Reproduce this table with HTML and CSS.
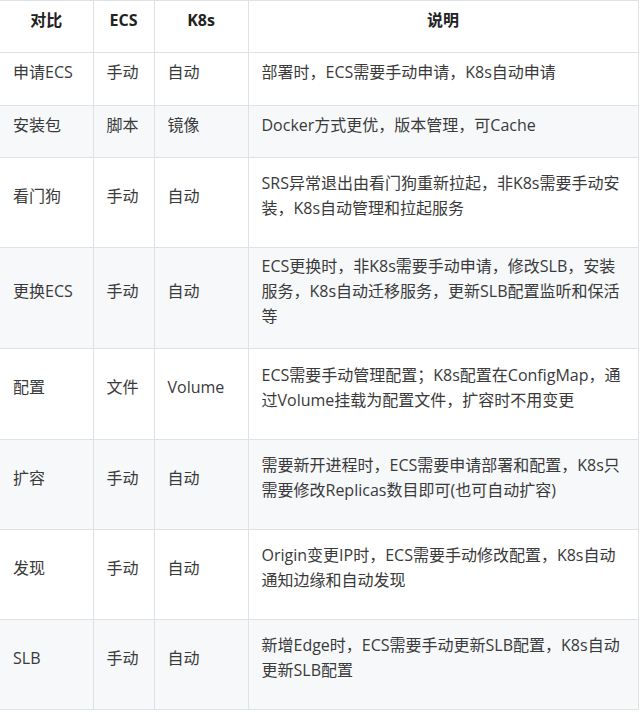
FILE: index.html
```html
<!DOCTYPE html>
<html lang="zh-CN">
<head>
<meta charset="utf-8">
<title>ECS vs K8s</title>
<link rel="stylesheet" href="styles.css">
</head>
<body>
<table class="cmp">
  <colgroup>
    <col class="c1"><col class="c2"><col class="c3"><col class="c4">
  </colgroup>
  <thead>
    <tr class="h52"><th>对比</th><th>ECS</th><th>K8s</th><th>说明</th></tr>
  </thead>
  <tbody>
    <tr class="h53"><td>申请ECS</td><td>手动</td><td>自动</td><td>部署时，ECS需要手动申请，K8s自动申请</td></tr>
    <tr class="h52"><td>安装包</td><td>脚本</td><td>镜像</td><td>Docker方式更优，版本管理，可Cache</td></tr>
    <tr class="h90"><td>看门狗</td><td>手动</td><td>自动</td><td>SRS异常退出由看门狗重新拉起，非K8s需要手动安装，K8s自动管理和拉起服务</td></tr>
    <tr class="h101"><td>更换ECS</td><td>手动</td><td>自动</td><td>ECS更换时，非K8s需要手动申请，修改SLB，安装服务，K8s自动迁移服务，更新SLB配置监听和保活等</td></tr>
    <tr class="h91"><td>配置</td><td>文件</td><td>Volume</td><td>ECS需要手动管理配置；K8s配置在ConfigMap，通过Volume挂载为配置文件，扩容时不用变更</td></tr>
    <tr class="h90"><td>扩容</td><td>手动</td><td>自动</td><td>需要新开进程时，ECS需要申请部署和配置，K8s只需要修改Replicas数目即可(也可自动扩容)</td></tr>
    <tr class="h90"><td>发现</td><td>手动</td><td>自动</td><td>Origin变更IP时，ECS需要手动修改配置，K8s自动通知边缘和自动发现</td></tr>
    <tr class="h90"><td>SLB</td><td>手动</td><td>自动</td><td>新增Edge时，ECS需要手动更新SLB配置，K8s自动更新SLB配置</td></tr>
  </tbody>
</table>
</body>
</html>
```

FILE: styles.css
```css
html, body {
  margin: 0;
  padding: 0;
  background: #ffffff;
}

.cmp {
  border-collapse: collapse;
  table-layout: fixed;
  width: 638px;
  font-family: "Open Sans", "Noto Sans CJK SC", sans-serif;
  font-size: 16px;
  line-height: 25px;
  color: #3a3a3a;
}

.c1 { width: 93px; }
.c2 { width: 61px; }
.c3 { width: 94px; }
.c4 { width: 390px; }

.cmp th,
.cmp td {
  border: 1px solid #dfe2e5;
  padding: 0 15px 13px 13px;
  vertical-align: middle;
  text-align: left;
}

.cmp th {
  font-weight: 700;
  color: #222222;
  text-align: center;
  padding-left: 14px;
  padding-right: 14px;
}

.cmp th:first-child,
.cmp td:first-child {
  border-left: none;
}

.cmp tr { background: #ffffff; }
.cmp tbody tr:nth-child(2n) { background: #f6f8fa; }

.h52 { height: 52px; }
.h53 { height: 53px; }
.h90 { height: 90px; }
.h91 { height: 91px; }
.h101 { height: 101px; }
```
